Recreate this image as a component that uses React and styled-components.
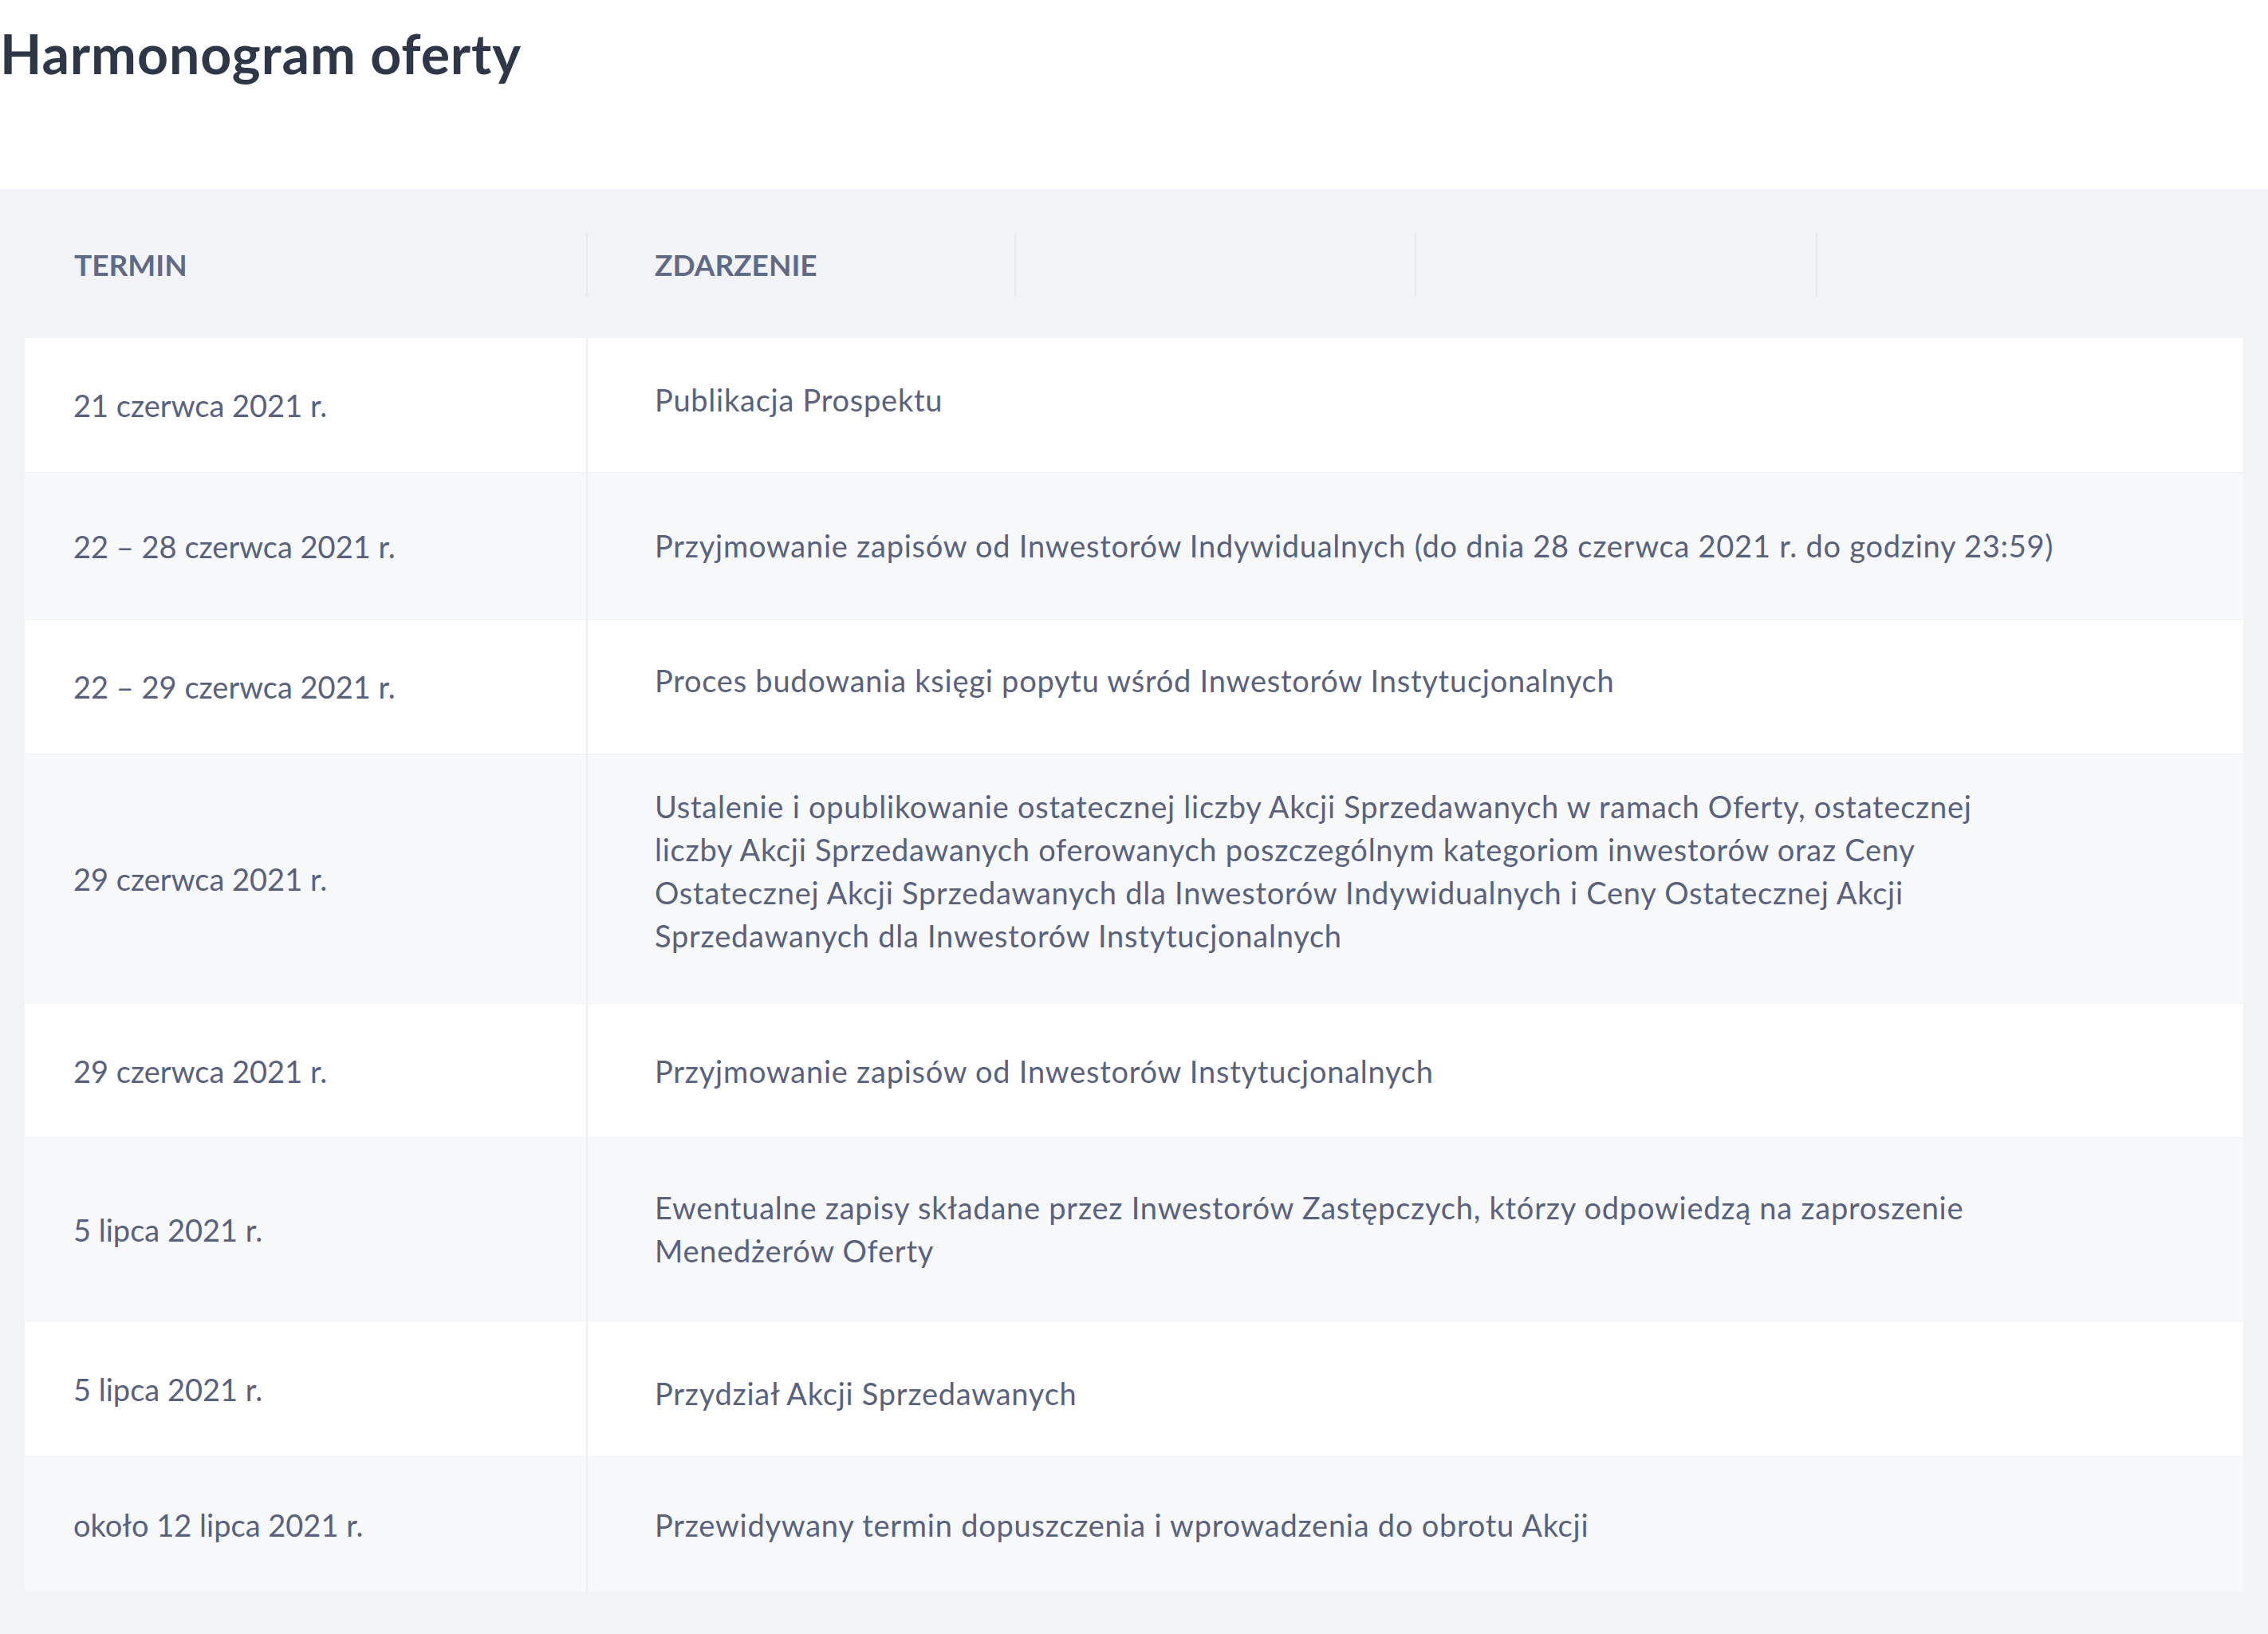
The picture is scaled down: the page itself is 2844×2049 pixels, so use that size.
import styled, { createGlobalStyle } from "styled-components";

const GlobalStyle = createGlobalStyle`
  * {
    box-sizing: border-box;
  }

  body {
    margin: 0;
    background: #ffffff;
    font-family: "Lato", "Open Sans", sans-serif;
  }
`;

const Page = styled.div`
  display: flex;
  flex-direction: column;
  min-height: 100vh;
`;

const TitleBar = styled.header`
  height: 237px;
  padding-top: 26px;
`;

const Title = styled.h1`
  margin: 0;
  font-size: 68px;
  line-height: 1.2;
  letter-spacing: 0.9px;
  font-weight: 700;
  color: #2d3748;
`;

const Panel = styled.section`
  flex: 1;
  background: #f2f3f7;
  padding: 55px 31px 52px;
`;

const HeaderRow = styled.div`
  display: grid;
  grid-template-columns: 704px 537px 502px 503px 1fr;
  margin-bottom: 53px;
`;

const HeaderCell = styled.div`
  display: flex;
  align-items: center;
  height: 79px;
  padding-left: ${(p) => (p.$first ? "62px" : "84px")};
  border-left: ${(p) => (p.$first ? "none" : "2px solid #e6e8ec")};
  font-size: 37px;
  font-weight: 700;
  color: #5f6a86;
`;

const Card = styled.div`
  display: flex;
  flex-direction: column;
`;

const Row = styled.div`
  display: grid;
  grid-template-columns: 704px 1fr;
  background: ${(p) => (p.$striped ? "#f7f8fa" : "#ffffff")};
  border-bottom: 1px solid #f0f1f5;
`;

const DateCell = styled.div`
  align-self: center;
  padding-left: 61px;
  font-size: 38px;
  line-height: 54px;
  color: #58627e;
`;

const EventCell = styled.div`
  padding: ${(p) => `${p.$top}px 0 ${p.$bottom}px 84px`};
  border-left: 2px solid #eceef2;
  font-size: 38px;
  line-height: 54px;
  letter-spacing: 0.75px;
  color: #58627e;
  white-space: nowrap;
`;

const schedule = [
  {
    date: "21 czerwca 2021 r.",
    lines: ["Publikacja Prospektu"],
    top: 50,
    bottom: 64,
  },
  {
    date: "22 – 28 czerwca 2021 r.",
    lines: [
      "Przyjmowanie zapisów od Inwestorów Indywidualnych (do dnia 28 czerwca 2021 r. do godziny 23:59)",
    ],
    top: 64,
    bottom: 65,
  },
  {
    date: "22 – 29 czerwca 2021 r.",
    lines: ["Proces budowania księgi popytu wśród Inwestorów Instytucjonalnych"],
    top: 49,
    bottom: 65,
  },
  {
    date: "29 czerwca 2021 r.",
    lines: [
      "Ustalenie i opublikowanie ostatecznej liczby Akcji Sprzedawanych w ramach Oferty, ostatecznej",
      "liczby Akcji Sprzedawanych oferowanych poszczególnym kategoriom inwestorów oraz Ceny",
      "Ostatecznej Akcji Sprzedawanych dla Inwestorów Indywidualnych i Ceny Ostatecznej Akcji",
      "Sprzedawanych dla Inwestorów Instytucjonalnych",
    ],
    top: 38,
    bottom: 58,
  },
  {
    date: "29 czerwca 2021 r.",
    lines: ["Przyjmowanie zapisów od Inwestorów Instytucjonalnych"],
    top: 57,
    bottom: 56,
  },
  {
    date: "5 lipca 2021 r.",
    lines: [
      "Ewentualne zapisy składane przez Inwestorów Zastępczych, którzy odpowiedzą na zaproszenie",
      "Menedżerów Oferty",
    ],
    top: 60,
    bottom: 61,
  },
  {
    date: "5 lipca 2021 r.",
    lines: ["Przydział Akcji Sprzedawanych"],
    top: 63,
    bottom: 52,
  },
  {
    date: "około 12 lipca 2021 r.",
    lines: ["Przewidywany termin dopuszczenia i wprowadzenia do obrotu Akcji"],
    top: 58,
    bottom: 57,
  },
];

const App = () => {
  return (
    <>
      <GlobalStyle />
      <Page>
        <TitleBar>
          <Title>Harmonogram oferty</Title>
        </TitleBar>

        <Panel>
          <HeaderRow>
            <HeaderCell $first>TERMIN</HeaderCell>
            <HeaderCell>ZDARZENIE</HeaderCell>
            <HeaderCell />
            <HeaderCell />
            <HeaderCell />
          </HeaderRow>

          <Card>
            {schedule.map((item, i) => (
              <Row key={i} $striped={i % 2 === 1}>
                <DateCell>{item.date}</DateCell>
                <EventCell $top={item.top} $bottom={item.bottom}>
                  {item.lines.map((line, j) => (
                    <div key={j}>{line}</div>
                  ))}
                </EventCell>
              </Row>
            ))}
          </Card>
        </Panel>
      </Page>
    </>
  );
};

export default App;
